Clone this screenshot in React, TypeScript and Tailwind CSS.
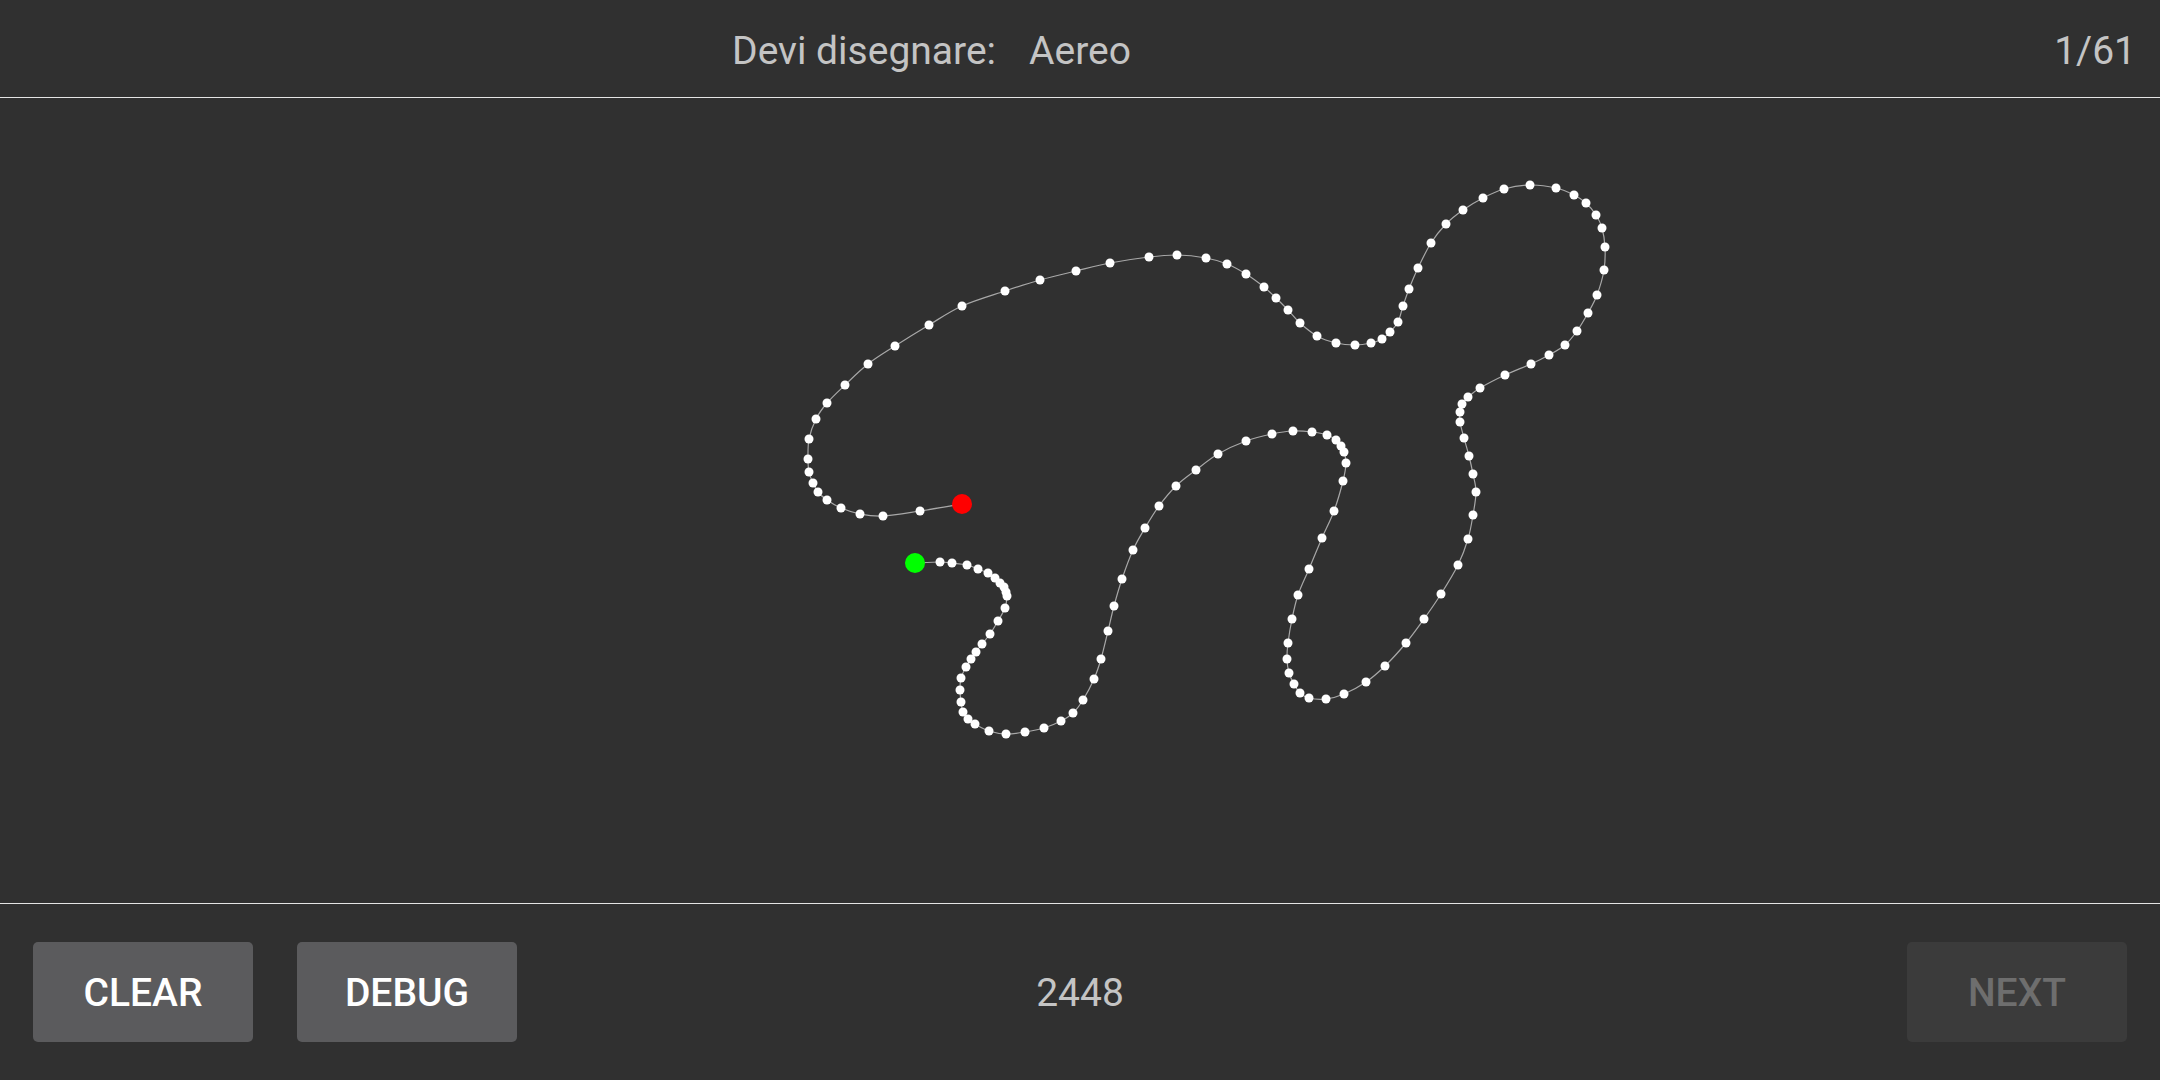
import React from 'react';

// traced points of the drawn stroke (page pixels), from start (green) to end (red)
const points: [number, number][] = [
  [915, 563], [940, 562], [952, 563], [967, 565], [978, 569], [988, 573], [995, 578], [1000, 583],
  [1004, 587], [1006, 592], [1007, 596], [1005, 608], [998, 621], [990, 634], [982, 644], [976, 652],
  [971, 659], [966, 667], [961, 678], [960, 690], [961, 702], [963, 712], [968, 719], [975, 724],
  [989, 731], [1006, 734], [1025, 732], [1044, 728], [1061, 721], [1073, 713], [1083, 700], [1094, 679],
  [1101, 659], [1108, 631], [1114, 606], [1122, 579], [1133, 550], [1145, 528], [1159, 506], [1176, 486],
  [1196, 470], [1218, 454], [1246, 441], [1272, 434], [1293, 431], [1312, 432], [1327, 435], [1336, 440],
  [1341, 446], [1344, 452], [1346, 463], [1343, 481], [1334, 511], [1322, 538], [1309, 569], [1298, 595],
  [1292, 619], [1288, 643], [1287, 659], [1289, 673], [1294, 684], [1300, 693], [1309, 698], [1326, 699],
  [1344, 694], [1366, 682], [1385, 666], [1406, 643], [1424, 619], [1441, 594], [1458, 565], [1468, 539],
  [1473, 515], [1476, 492], [1473, 474], [1469, 456], [1464, 438], [1460, 422], [1460, 412], [1462, 404],
  [1468, 397], [1480, 388], [1505, 375], [1531, 364], [1549, 355], [1565, 345], [1577, 331], [1588, 313],
  [1597, 295], [1604, 270], [1605, 247], [1602, 228], [1596, 215], [1586, 203], [1574, 195], [1556, 188],
  [1530, 185], [1504, 189], [1483, 198], [1463, 210], [1446, 224], [1431, 243], [1418, 268], [1409, 289],
  [1403, 306], [1398, 322], [1390, 332], [1382, 339], [1371, 343], [1355, 345], [1336, 343], [1317, 336],
  [1300, 323], [1288, 310], [1276, 298], [1264, 287], [1246, 274], [1227, 264], [1206, 258], [1177, 255],
  [1149, 257], [1110, 263], [1076, 271], [1040, 280], [1005, 291], [962, 306], [929, 325], [895, 346],
  [868, 364], [845, 385], [827, 403], [816, 419], [809, 439], [808, 459], [809, 472], [813, 483],
  [818, 492], [827, 500], [841, 508], [860, 514], [883, 516], [920, 511], [962, 504],
];

// catmull-rom -> cubic bezier so the line curves through the dots
const smoothPath = (pts: [number, number][]) => {
  let d = `M ${pts[0][0]} ${pts[0][1]}`;
  for (let i = 0; i < pts.length - 1; i++) {
    const p0 = pts[i - 1] || pts[i];
    const p1 = pts[i];
    const p2 = pts[i + 1];
    const p3 = pts[i + 2] || p2;
    const c1x = p1[0] + (p2[0] - p0[0]) / 6;
    const c1y = p1[1] + (p2[1] - p0[1]) / 6;
    const c2x = p2[0] - (p3[0] - p1[0]) / 6;
    const c2y = p2[1] - (p3[1] - p1[1]) / 6;
    d += ` C ${c1x} ${c1y} ${c2x} ${c2y} ${p2[0]} ${p2[1]}`;
  }
  return d;
};

const App: React.FC = () => {
  const inner = points.slice(1, -1);
  const start = points[0];
  const end = points[points.length - 1];

  return (
    <div className="flex h-screen w-full flex-col bg-[#303030] font-['Roboto',sans-serif]">
      {/* header */}
      <div className="grid h-[98px] shrink-0 grid-cols-[1fr_auto_1fr] items-center border-b border-[#e4e4e4] pt-[6px] text-[39px] text-[#c4c4c4]">
        <div className="flex justify-end pr-[33px]">Devi disegnare:</div>
        <div>Aereo</div>
        <div className="flex justify-end pr-[24px]">1/61</div>
      </div>

      {/* drawing area */}
      <div className="min-h-0 flex-1">
        <svg className="block h-full w-full" viewBox="0 98 2160 805" preserveAspectRatio="none">
          <path d={smoothPath(points)} fill="none" stroke="#a8a8a8" strokeWidth={1.2} />
          {inner.map((p, i) => (
            <circle key={i} cx={p[0]} cy={p[1]} r={4.5} fill="#ffffff" />
          ))}
          <circle cx={start[0]} cy={start[1]} r={10} fill="#00ff00" />
          <circle cx={end[0]} cy={end[1]} r={10} fill="#ff0000" />
        </svg>
      </div>

      {/* footer */}
      <div className="grid h-[177px] shrink-0 grid-cols-[1fr_auto_1fr] items-center border-t border-[#e4e4e4] px-[33px]">
        <div className="flex gap-[44px]">
          <button className="flex h-[100px] w-[220px] items-center justify-center rounded-[5px] bg-[#5b5b5d] pt-[3px] text-[39px] font-medium text-white">
            CLEAR
          </button>
          <button className="flex h-[100px] w-[220px] items-center justify-center rounded-[5px] bg-[#5b5b5d] pt-[3px] text-[39px] font-medium text-white">
            DEBUG
          </button>
        </div>
        <div className="pt-[3px] text-[39px] text-[#c4c4c4]">2448</div>
        <div className="flex justify-end">
          <button className="flex h-[100px] w-[220px] items-center justify-center rounded-[5px] bg-[#3b3b3b] pt-[3px] text-[39px] font-medium text-[#6e6e6e]">
            NEXT
          </button>
        </div>
      </div>
    </div>
  );
};

export default App;
